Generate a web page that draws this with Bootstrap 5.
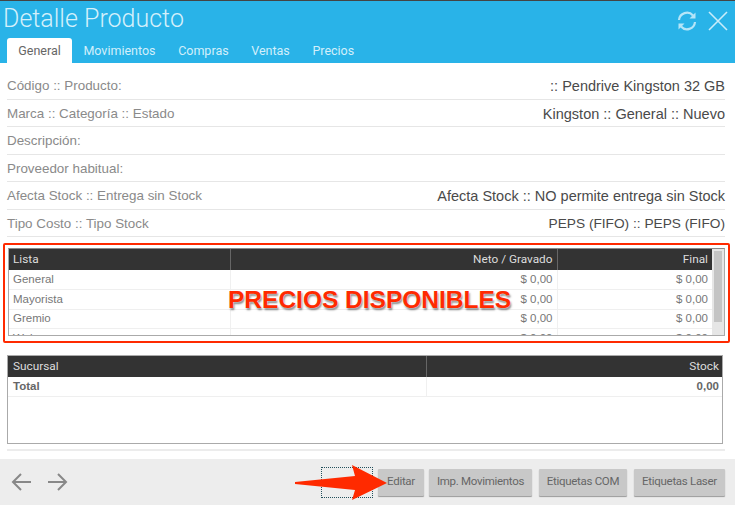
<!DOCTYPE html>
<html lang="es">
<head>
  <meta charset="UTF-8">
  <meta name="viewport" content="width=device-width, initial-scale=1">
  <title>Detalle Producto</title>
  <link href="https://cdn.jsdelivr.net/npm/bootstrap@5.3.3/dist/css/bootstrap.min.css" rel="stylesheet">
  <style>
    html, body { height: 100%; }
    body { font-family: Roboto, sans-serif; background: #fff; overflow: hidden; }

    .shell { width: 735px; height: 505px; }

    .top-head { background: #29b3e8; border-top: 1px solid #444; height: 63px; flex: none; }
    .top-title { font-size: 25px; font-weight: 300; color: #d4f0fb; line-height: 30px; padding: 3px 0 0 3px; }
    .top-icons { gap: 11px; padding: 6px 7px 0 0; }

    .tab-row { padding: 4px 0 0 7px; }
    .tab-item { font-size: 12.5px; font-weight: 400; color: #d2effb; height: 25px; line-height: 26px; padding: 0 11.3px; text-decoration: none; }
    .tab-item.on { background: #fff; color: #666; border-radius: 3px 3px 0 0; }

    .info-area { padding: 9px 10px 0 7px; }
    .info-line { height: 27.5px; border-bottom: 1px solid #e6e6e6; font-family: "Liberation Sans", sans-serif; font-size: 13.4px; padding-top: 6px; line-height: 16px; }
    .info-line .lbl { color: #8a8a8a; }
    .info-line .val { color: #4a4a4a; font-size: 14.5px; }
    .info-line .val-tight { font-size: 13.7px; }

    .red-box { margin: 6px 5px 0 3px; height: 100px; border: 2px solid #ff2a00; border-radius: 2px; padding: 3px 3px 5px; }
    .grid-wrap { border: 1px solid #aaa; border-top-color: #888; height: 100%; overflow: hidden; background: #fff; }
    .scroll-track { width: 12px; background: #e6e6e6; flex: none; padding: 2px; }
    .scroll-thumb { height: 71px; background: #c4c4c4; }

    .data-grid { width: 100%; table-layout: fixed; border-collapse: collapse; }
    .data-grid th { background: #333; color: #ddd; font-size: 11.8px; font-weight: 400; height: 21px; padding: 0 4px; border-left: 1px solid #666; }
    .data-grid th:first-child { border-left: 0; }
    .data-grid td { font-family: "Liberation Sans", sans-serif; font-size: 11.5px; color: #777; height: 19.5px; padding: 0 4px; border-left: 1px solid #f0f0f0; border-bottom: 1px solid #efefef; }
    .data-grid td:first-child { border-left: 0; }

    .promo-text { position: absolute; left: 228px; top: 286px; font-family: "Liberation Sans", sans-serif; font-weight: 700; font-size: 24.5px; line-height: 28px; color: #ff2a00; text-shadow: 0 0 2px #fff, 1px 2px 2px rgba(0,0,0,.5); }

    .stock-box { margin: 12px 12px 0 7px; height: 89px; border: 1px solid #aaa; }
    .stock-box th, .stock-box td { padding: 0 3px 0 5px; }
    .stock-box td { height: 19px; font-weight: 700; color: #666; }
    .thin-rule { margin: 5px 10px 0 7px; height: 2px; background: #ececec; }

    .foot-bar { background: #ededed; margin-top: 8px; flex: 1; padding: 0 10px 0 11px; }
    .arrows { gap: 15px; }
    .act-btn { background: #c8c8c8; border: 0; border-radius: 1px; color: #666; font-size: 11.5px; letter-spacing: -.3px; font-weight: 400; height: 27px; padding: 0; box-shadow: 0 1px 1px rgba(0,0,0,.35); }
    .foot-btns { gap: 7px; }
    .edit-btn { margin-right: -2px; }

    .dot-focus { width: 52px; height: 31px; border: 1px dotted #24505c; margin-right: -2px; flex: none; }
    .red-arrow { position: absolute; left: 295px; top: 464px; }
  </style>
</head>
<body>
<div class="shell d-flex flex-column position-relative">

  <div class="top-head">
    <div class="d-flex justify-content-between">
      <div class="top-title">Detalle Producto</div>
      <div class="top-icons d-flex align-items-center">
        <svg width="20" height="20" viewBox="0 0 20 20" fill="none" stroke="#b5e5f8" stroke-width="2.2">
          <path d="M2 9a8 8 0 0 1 14-4.5"/><path d="M18 11a8 8 0 0 1-14 4.5"/>
          <path d="M18.5 1.5v6h-6z" fill="#b5e5f8" stroke="none"/><path d="M1.500 18.500v-6h6z" fill="#b5e5f8" stroke="none"/>
        </svg>
        <svg width="20" height="20" viewBox="0 0 20 20" fill="none" stroke="#c9ecfa" stroke-width="1.6">
          <path d="M1 1l18 18M19 1L1 19"/>
        </svg>
      </div>
    </div>
    <div class="tab-row d-flex">
      <a class="tab-item on" href="#">General</a>
      <a class="tab-item" href="#">Movimientos</a>
      <a class="tab-item" href="#">Compras</a>
      <a class="tab-item" href="#">Ventas</a>
      <a class="tab-item" href="#">Precios</a>
    </div>
  </div>

  <div class="info-area">
    <div class="info-line d-flex justify-content-between"><span class="lbl">Código :: Producto:</span><span class="val">:: Pendrive Kingston 32 GB</span></div>
    <div class="info-line d-flex justify-content-between"><span class="lbl">Marca :: Categoría :: Estado</span><span class="val">Kingston :: General :: Nuevo</span></div>
    <div class="info-line d-flex justify-content-between"><span class="lbl">Descripción:</span></div>
    <div class="info-line d-flex justify-content-between"><span class="lbl">Proveedor habitual:</span></div>
    <div class="info-line d-flex justify-content-between"><span class="lbl">Afecta Stock :: Entrega sin Stock</span><span class="val">Afecta Stock :: NO permite entrega sin Stock</span></div>
    <div class="info-line d-flex justify-content-between"><span class="lbl">Tipo Costo :: Tipo Stock</span><span class="val val-tight">PEPS (FIFO) :: PEPS (FIFO)</span></div>
  </div>

  <div class="red-box">
    <div class="grid-wrap d-flex">
      <div class="flex-grow-1 overflow-hidden">
        <table class="data-grid">
          <colgroup><col style="width:221px"><col style="width:327px"><col></colgroup>
          <thead><tr><th>Lista</th><th class="text-end">Neto / Gravado</th><th class="text-end">Final</th></tr></thead>
          <tbody>
            <tr><td>General</td><td class="text-end">$ 0,00</td><td class="text-end">$ 0,00</td></tr>
            <tr><td>Mayorista</td><td class="text-end">$ 0,00</td><td class="text-end">$ 0,00</td></tr>
            <tr><td>Gremio</td><td class="text-end">$ 0,00</td><td class="text-end">$ 0,00</td></tr>
            <tr><td>Web</td><td class="text-end">$ 0,00</td><td class="text-end">$ 0,00</td></tr>
          </tbody>
        </table>
      </div>
      <div class="scroll-track"><div class="scroll-thumb"></div></div>
    </div>
  </div>
  <div class="promo-text">PRECIOS DISPONIBLES</div>

  <div class="stock-box">
    <table class="data-grid">
      <colgroup><col style="width:418px"><col></colgroup>
      <thead><tr><th>Sucursal</th><th class="text-end">Stock</th></tr></thead>
      <tbody><tr><td>Total</td><td class="text-end">0,00</td></tr></tbody>
    </table>
  </div>
  <div class="thin-rule"></div>

  <div class="foot-bar d-flex align-items-center justify-content-between">
    <div class="arrows d-flex">
      <svg width="21" height="18" viewBox="0 0 21 18" fill="none" stroke="#888" stroke-width="2"><path d="M20 9H2M10 1L2 9l8 8"/></svg>
      <svg width="21" height="18" viewBox="0 0 21 18" fill="none" stroke="#888" stroke-width="2"><path d="M1 9h18M11 1l8 8-8 8"/></svg>
    </div>
    <div class="foot-btns d-flex align-items-center">
      <div class="dot-focus"></div>
      <button class="act-btn edit-btn" style="width:46px" type="button">Editar</button>
      <button class="act-btn" style="width:103px" type="button">Imp. Movimientos</button>
      <button class="act-btn" style="width:88px" type="button">Etiquetas COM</button>
      <button class="act-btn" style="width:91px" type="button">Etiquetas Laser</button>
    </div>
  </div>

  <svg class="red-arrow" width="92" height="38" viewBox="0 0 92 38">
    <path d="M0 18L60 12 57 1 92 19 57 36 60 26 0 20z" fill="#ff2a00"/>
  </svg>
</div>
<script src="https://cdn.jsdelivr.net/npm/bootstrap@5.3.3/dist/js/bootstrap.bundle.min.js"></script>
</body>
</html>
